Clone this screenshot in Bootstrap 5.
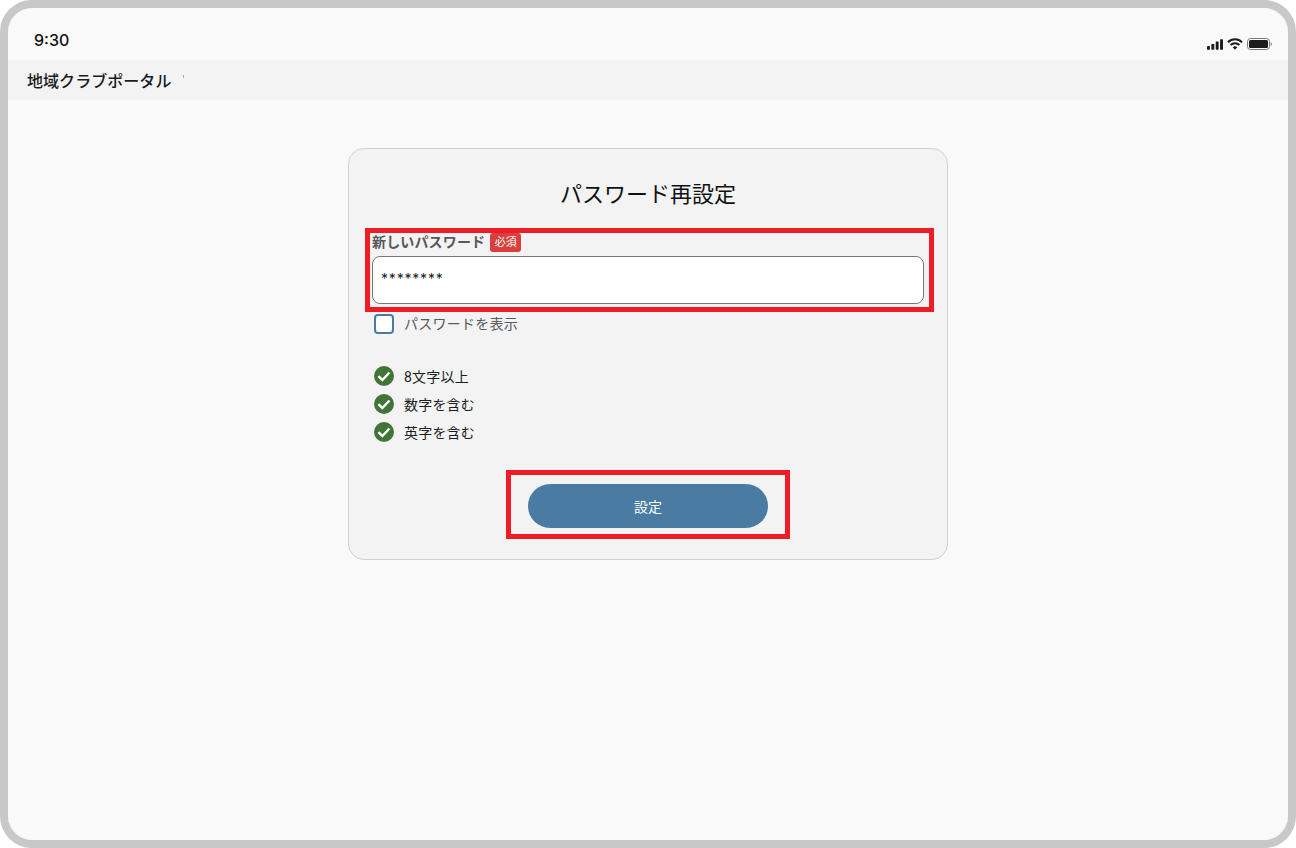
<!DOCTYPE html>
<html lang="ja">
<head>
<meta charset="utf-8">
<title>パスワード再設定</title>
<link href="https://cdn.jsdelivr.net/npm/bootstrap@5.3.0/dist/css/bootstrap.min.css" rel="stylesheet">
<style>
html,body{margin:0;height:100%;background:#fff}
body{font-family:Roboto,"Noto Sans CJK JP",sans-serif;color:#1a1c1e;overflow:hidden}
.device{width:1296px;height:848px;border:8px solid #c8c8c8;border-radius:32px;background:#f9f9f9;overflow:hidden}
.statusbar{height:52px;padding:0 16px 0 26px}
.clock{font-family:Inter,sans-serif;font-size:16px;font-weight:500;line-height:20px;margin-top:22px;color:#111}
.status-icons{margin-top:30px;gap:4px}
.appbar{height:40px;background:#f3f3f3;padding:4px 0 0 19px;font-size:16px;font-weight:500;line-height:36px;letter-spacing:.05px}
.tick-mark{width:1px;height:3px;background:#aaa;margin:-12px 0 0 12px}
.form-panel{width:600px;height:412px;margin:48px auto 0;background:#f3f3f3;border:1px solid #cfcfcf;border-radius:16px;padding:0 23px;position:relative}
.panel-title{font-size:22px;font-weight:400;line-height:28px;margin:32px 0 0;text-align:center;color:#111}
.field-block{margin-top:23px}
.field-label{font-size:14px;font-weight:700;line-height:20px;color:#55585a;gap:5px;height:20px;letter-spacing:.15px}
.req-tag{background:#d9403c;color:#fff;font-size:11px;font-weight:400;line-height:20px;height:19px;padding:0 4.5px;border-radius:3px;letter-spacing:.1px}
.pw-input.form-control{height:48px;border:1px solid #787872;border-radius:8px;background:#fff;padding:0 8px 3px;font-family:Inter,sans-serif;font-size:14px;letter-spacing:.8px;color:#1a1c1e;box-shadow:none;margin-top:4px}
.show-row{margin:10px 0 0 2px;gap:10px;height:20px;font-size:14px;color:#55585c;letter-spacing:.25px}
.box-check{width:20px;height:20px;border:2px solid #4a7ba3;border-radius:4px;background:#fff}
.rules{margin:32px 0 0 2px;padding:0;list-style:none;font-size:14px;color:#1a1c1e;letter-spacing:.2px}
.rules li{height:20px;gap:10px;margin-bottom:8px;line-height:22px}
.btn.save-btn{display:block;width:240px;height:44px;margin:42px auto 0;border:0;border-radius:22px;background:#4a7ba3;color:#fff;font-size:14px;font-weight:400;padding:2px 0 0;letter-spacing:.1px}
.hl-box{position:absolute;border:5px solid #ee1c25;pointer-events:none}
.hl-field{left:16px;top:79px;width:569px;height:84px}
.hl-btn{left:157px;top:321px;width:284px;height:69px}
</style>
</head>
<body>
<div class="device d-flex flex-column">
  <div class="statusbar d-flex justify-content-between align-items-start">
    <div class="clock">9:30</div>
    <div class="status-icons d-flex align-items-center">
      <svg width="16" height="11" viewBox="0 0 16.500 11"><rect x="0" y="7" width="3" height="4" rx=".5" fill="#1a1c1e"/><rect x="4.500" y="5" width="3" height="6" rx=".5" fill="#1a1c1e"/><rect x="9" y="2.500" width="3" height="8.500" rx=".5" fill="#1a1c1e"/><rect x="13.500" y="0" width="3" height="11" rx=".5" fill="#1a1c1e"/></svg>
      <svg width="16" height="12" viewBox="0 0 16 12" fill="none" stroke="#1a1c1e" stroke-width="2"><path d="M1 4.200a10 10 0 0 1 14 0"/><path d="M3.600 7a6.300 6.300 0 0 1 8.800 0"/><path d="M8 11.800 5.700 9.300a3.300 3.300 0 0 1 4.600 0z" fill="#1a1c1e" stroke="none"/></svg>
      <svg width="25" height="12" viewBox="0 0 25 12"><rect x=".5" y=".5" width="22" height="11" rx="3" fill="none" stroke="#77797b"/><rect x="2" y="2" width="19" height="8" rx="1.500" fill="#1a1c1e"/><rect x="23.500" y="4.500" width="1.300" height="3" rx=".6" fill="#8a8c8e"/></svg>
    </div>
  </div>
  <div class="appbar d-flex align-items-center"><span>地域クラブポータル</span><span class="tick-mark"></span></div>
  <main class="form-panel">
    <h1 class="panel-title">パスワード再設定</h1>
    <div class="field-block">
      <label class="field-label d-flex align-items-center" for="pw">新しいパスワード<span class="req-tag">必須</span></label>
      <input id="pw" class="form-control pw-input" type="text" value="********">
    </div>
    <div class="show-row d-flex align-items-center"><span class="box-check"></span><span>パスワードを表示</span></div>
    <ul class="rules">
      <li class="d-flex"><svg width="20" height="20" viewBox="0 0 20 20"><circle cx="10" cy="10" r="10" fill="#417537"/><path d="M4.500 10.200 8.300 14 15.500 6.500" fill="none" stroke="#fff" stroke-width="2.400"/></svg><span>8文字以上</span></li>
      <li class="d-flex"><svg width="20" height="20" viewBox="0 0 20 20"><circle cx="10" cy="10" r="10" fill="#417537"/><path d="M4.500 10.200 8.300 14 15.500 6.500" fill="none" stroke="#fff" stroke-width="2.400"/></svg><span>数字を含む</span></li>
      <li class="d-flex"><svg width="20" height="20" viewBox="0 0 20 20"><circle cx="10" cy="10" r="10" fill="#417537"/><path d="M4.500 10.200 8.300 14 15.500 6.500" fill="none" stroke="#fff" stroke-width="2.400"/></svg><span>英字を含む</span></li>
    </ul>
    <button class="btn save-btn" type="button">設定</button>
    <div class="hl-box hl-field"></div>
    <div class="hl-box hl-btn"></div>
  </main>
</div>
<script src="https://cdn.jsdelivr.net/npm/bootstrap@5.3.0/dist/js/bootstrap.bundle.min.js"></script>
</body>
</html>
